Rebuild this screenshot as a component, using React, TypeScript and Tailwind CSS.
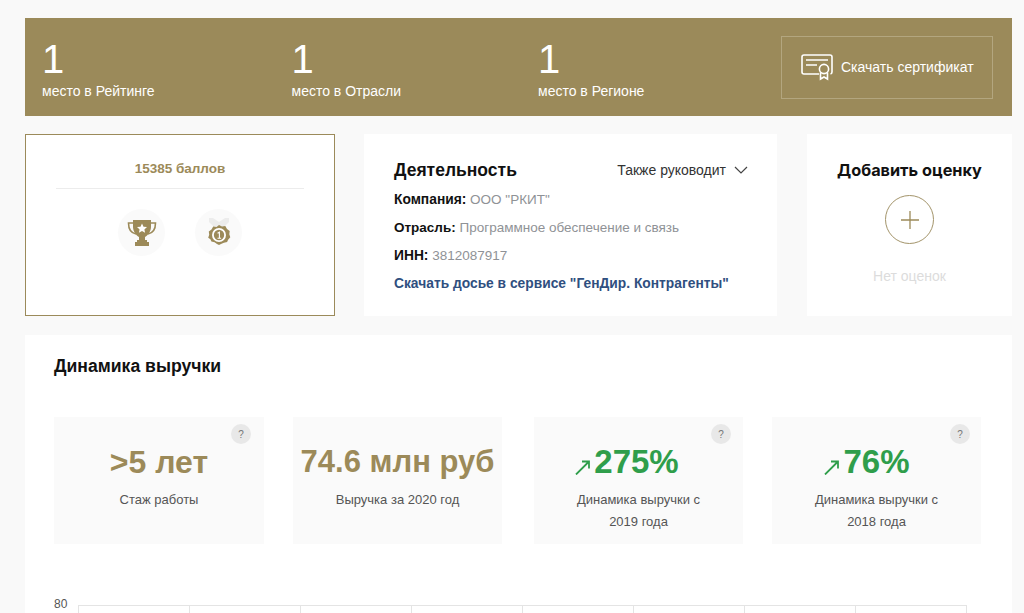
const SANS = 'font-["Liberation_Sans",Arial,sans-serif]';

const RANKS = [
  { label: 'место в Рейтинге', width: 'w-[249.5px]' },
  { label: 'место в Отрасли', width: 'w-[246.5px]' },
  { label: 'место в Регионе', width: 'w-[240px]' },
];

const STATS: { value: string; caption: string[]; up?: boolean; hint?: string; box: string; size: string }[] = [
  { value: '>5 лет', caption: ['Стаж работы'], hint: 'right-[13px]', box: 'w-[210px]', size: 'text-[32px] text-[#9c8a59]' },
  { value: '74.6 млн руб', caption: ['Выручка за 2020 год'], box: 'ml-[29px] w-[209px]', size: 'text-[31px] text-[#9c8a59]' },
  { value: '275%', caption: ['Динамика выручки с', '2019 года'], up: true, hint: 'right-[12px]', box: 'ml-[32px] w-[209px]', size: 'pr-[23px] text-[33px] text-[#2f9e4b]' },
  { value: '76%', caption: ['Динамика выручки с', '2018 года'], up: true, hint: 'right-[11px]', box: 'ml-[29px] w-[209px]', size: 'pr-[19px] text-[33px] text-[#2f9e4b]' },
];

function CertIcon() {
  return (
    <svg width="32" height="27" viewBox="0 0 32 27" fill="none" stroke="#fff" strokeWidth="1.600">
      <path d="M18 20H3a2 2 0 0 1-2-2V3a2 2 0 0 1 2-2h26a2 2 0 0 1 2 2v15a2 2 0 0 1-1.500 2" />
      <path d="M5 6h22M5 11h11" />
      <circle cx="23" cy="15" r="4.600" />
      <path d="M19.500 18.500V25l3.500-2 3.500 2v-6.500" />
    </svg>
  );
}

function TrophyIcon() {
  return (
    <svg width="30" height="26" viewBox="0 0 30 26">
      <path d="M7 3H1.500c0 6 2.500 10 7.500 11M23 3h5.500c0 6-2.500 10-7.500 11" fill="none" stroke="#9c8a59" strokeWidth="1.600" />
      <path d="M6 0h18v7c0 5-4 9-6 10v3h2v2h2v4H8v-4h2v-2h2v-3c-2-1-6-5-6-10z" fill="#9c8a59" />
      <path d="M15 3.500l1.500 3.200 3.500.4-2.600 2.300.7 3.400-3.100-1.700-3.100 1.700.7-3.400L10 7.100l3.500-.4z" fill="#fff" />
    </svg>
  );
}

function MedalIcon() {
  return (
    <svg width="24" height="30" viewBox="0 0 24 30">
      <path d="M2 0h4l6 4 6-4h4v4l-6 6H8L2 4z" fill="#ececec" />
      <path d="M12 7l3 1.500 3.300-.4 1.700 2.900 2.700 1.900-.4 3.300 1 3.100-2.200 2.500-1 2.200-3.200.8L14 26l-2 1-2-1-2.400-1.700-3.200-.8-1-2.200L1.200 19.800l1-3.100-.4-3.300L4.500 11.500l1.700-2.900 3.300.4z" fill="#9c8a59" />
      <circle cx="12" cy="17" r="7" fill="#fff" />
      <circle cx="12" cy="17" r="5.200" fill="#9c8a59" />
      <path d="M10.600 15.300l1.800-1.100v6M10.500 20.200h3.600" stroke="#fff" strokeWidth="1.100" fill="none" />
    </svg>
  );
}

function Arrow() {
  return (
    <svg width="15" height="15" viewBox="0 0 15 15" fill="none" stroke="#2f9e4b" strokeWidth="1.800" className="mt-[11px] mr-[4px]">
      <path d="M1 14.500L14 1.500M7 1.500h7v7" />
    </svg>
  );
}

export default function App() {
  return (
    <div className={`${SANS} h-[613px] w-[1024px] overflow-hidden bg-[#f9f9f9] pt-[18px] pl-[25px] pr-[12px]`}>
      <div className="flex h-[98px] items-center bg-[#9b8a5a] pl-[17px] pr-[19px] text-white">
        {RANKS.map((r) => (
          <div key={r.label} className={`${r.width} shrink-0`}>
            <div className="text-[40px] leading-[46px]">1</div>
            <div className="mt-px text-[14px] leading-[16px]">{r.label}</div>
          </div>
        ))}
        <div className="ml-auto flex h-[63px] w-[212px] items-center border border-[#b3a67f] pl-[19px]">
          <CertIcon />
          <span className="ml-[8px] text-[14px]">Скачать сертификат</span>
        </div>
      </div>

      <div className="mt-[18px] flex h-[182px]">
        <div className="flex w-[310px] flex-col items-center border border-[#9b8a5a] bg-white px-[30px] pt-[26px]">
          <div className="text-[13.5px] leading-[16px] font-bold text-[#9c8a59]">15385 баллов</div>
          <div className="mt-[11px] h-px w-full bg-[#ececec]" />
          <div className="mt-[20px] flex gap-[30px]">
            <div className="flex h-[47px] w-[47px] items-center justify-center rounded-full bg-[#fafafa]">
              <TrophyIcon />
            </div>
            <div className="flex h-[47px] w-[47px] items-center justify-center rounded-full bg-[#fafafa]">
              <MedalIcon />
            </div>
          </div>
        </div>

        <div className="ml-[29px] w-[413px] bg-white pt-[25px] pl-[30px] pr-[29px]">
          <div className="flex items-center justify-between">
            <div className="text-[17.5px] leading-[22px] font-bold text-[#111]">Деятельность</div>
            <div className="flex items-center text-[14px] text-[#333]">
              Также руководит
              <svg width="14" height="8" viewBox="0 0 14 8" fill="none" stroke="#444" strokeWidth="1.200" className="ml-[8px]">
                <path d="M1 1l6 6 6-6" />
              </svg>
            </div>
          </div>
          <div className="mt-[5px] text-[13.5px] leading-[28px] text-[#8f9296]">
            <div><b className="text-[13.8px] text-[#111]">Компания:</b> ООО "РКИТ"</div>
            <div><b className="text-[13.5px] text-[#111]">Отрасль:</b> Программное обеспечение и связь</div>
            <div><b className="text-[13.8px] text-[#111]">ИНН:</b> 3812087917</div>
            <div className="text-[13.8px] font-bold text-[#2f4f7f]">Скачать досье в сервисе "ГенДир. Контрагенты"</div>
          </div>
        </div>

        <div className="ml-[30px] flex w-[205px] flex-col items-center bg-white pt-[25px]">
          <div className='font-["Inter",sans-serif] text-[16.3px] leading-[22px] font-bold text-[#111]'>Добавить оценку</div>
          <div className="mt-[14px] flex h-[49px] w-[49px] items-center justify-center rounded-full border border-[#a3946a]">
            <svg width="18" height="18" viewBox="0 0 18 18" stroke="#9c8a59" strokeWidth="1.300">
              <path d="M9 0v18M0 9h18" />
            </svg>
          </div>
          <div className="mt-[22px] text-[14px] text-[#dcdcdc]">Нет оценок</div>
        </div>
      </div>

      <div className="mt-[19px] h-[300px] bg-white px-[29px] pt-[20px]">
        <div className="text-[17.6px] leading-[22px] font-bold text-[#111]">Динамика выручки</div>
        <div className="mt-[40px] flex">
          {STATS.map((s) => (
            <div key={s.value} className={`relative h-[127px] ${s.box} bg-[#fafafa] pt-[25px] text-center`}>
              {s.hint && (
                <div className={`absolute top-[7px] ${s.hint} flex h-5 w-5 items-center justify-center rounded-full bg-[#e8e8e8] text-[10px] text-[#777]`}>?</div>
              )}
              <div className={`flex h-[40px] items-center justify-center ${s.size} font-bold whitespace-nowrap`}>
                {s.up && <Arrow />}
                {s.value}
              </div>
              <div className="mt-[7px] text-[13px] leading-[22px] text-[#555]">
                {s.caption.map((c) => <div key={c}>{c}</div>)}
              </div>
            </div>
          ))}
        </div>
        <div className="mt-[53px] flex items-start">
          <div className="w-[24px] text-[12px] leading-[14px] text-[#555]">80</div>
          <div className="mt-[8px] grid h-[40px] w-[889px] grid-cols-8 border-t border-r border-[#e4e4e4]">
            {Array.from({ length: 8 }).map((_, i) => (
              <div key={i} className="border-l border-[#e4e4e4]" />
            ))}
          </div>
        </div>
      </div>
    </div>
  );
}
